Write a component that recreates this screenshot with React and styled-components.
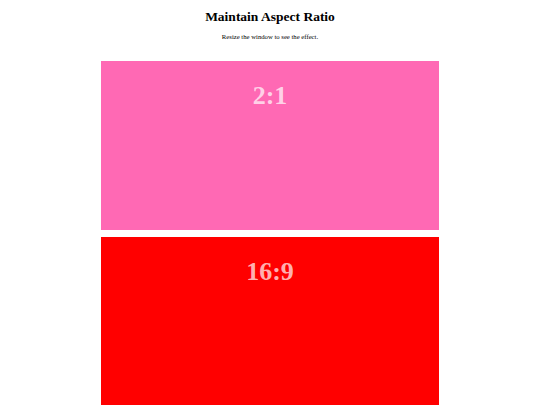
import styled, { createGlobalStyle } from "styled-components";

const GlobalStyle = createGlobalStyle`
  html, body {
    margin: 0;
    padding: 0;
    background: #fff;
  }
  body {
    font-family: "Liberation Serif", "Times New Roman", serif;
    color: #000;
  }
`;

const Page = styled.div`
  display: flex;
  flex-direction: column;
  align-items: center;
  padding-top: 9px;
`;

const Title = styled.h1`
  margin: 0;
  font-size: 13.5px;
  font-weight: 700;
  line-height: 16px;
  text-align: center;
`;

const Subtitle = styled.p`
  margin: 8px 0 0;
  font-size: 6.7px;
  line-height: 8px;
  text-align: center;
`;

const Stack = styled.div`
  display: flex;
  flex-direction: column;
  gap: 7px;
  width: 338px;
  margin-top: 20px;
`;

const RatioBox = styled.div`
  width: 100%;
  aspect-ratio: ${(p) => p.$ratio};
  background: ${(p) => p.$bg};
  display: flex;
  justify-content: center;
  align-items: flex-start;
`;

const Label = styled.h2`
  margin: 20px 0 0;
  font-size: 26px;
  line-height: 30px;
  font-weight: 700;
  color: rgba(255, 255, 255, 0.7);
`;

const boxes = [
  { label: "2:1", ratio: "2 / 1", bg: "#ff69b4" },
  { label: "16:9", ratio: "16 / 9", bg: "#ff0000" },
];

const App = () => {
  return (
    <>
      <GlobalStyle />
      <Page>
        <Title>Maintain Aspect Ratio</Title>
        <Subtitle>Resize the window to see the effect.</Subtitle>
        <Stack>
          {boxes.map((b) => (
            <RatioBox key={b.label} $ratio={b.ratio} $bg={b.bg}>
              <Label>{b.label}</Label>
            </RatioBox>
          ))}
        </Stack>
      </Page>
    </>
  );
};

export default App;
